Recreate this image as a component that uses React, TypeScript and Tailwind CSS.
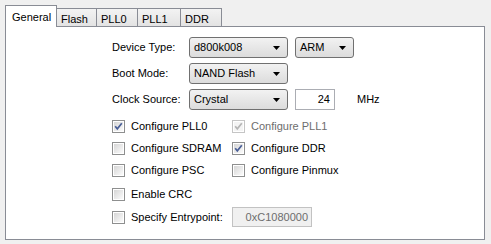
import React from 'react'

const font = { fontFamily: '"Liberation Sans", Arial, sans-serif' }

function Check({ checked = false, disabled = false }: { checked?: boolean; disabled?: boolean }) {
  return (
    <svg width="13" height="13" viewBox="0 0 13 13" className="shrink-0">
      <defs>
        <linearGradient id="cbg" x1="0" y1="0" x2="1" y2="1">
          <stop offset="0" stopColor="#d6d6d6" />
          <stop offset="1" stopColor="#fbfbfb" />
        </linearGradient>
      </defs>
      <rect x="0.5" y="0.5" width="12" height="12" fill="#fff" stroke={disabled ? '#c5c5c5' : '#8e8f8f'} />
      <rect x="2" y="2" width="9" height="9" fill={disabled ? '#f4f4f4' : 'url(#cbg)'} />
      {checked && (
        <path
          d="M3.2 6.2 L5.3 8.8 L9.8 3.2"
          fill="none"
          stroke={disabled ? '#b5b5b5' : '#4a5f97'}
          strokeWidth="1.7"
        />
      )}
    </svg>
  )
}

function Combo({ value, width }: { value: string; width: string }) {
  return (
    <div
      className={`${width} h-[21px] flex items-center justify-between pl-[4px] pr-[7px] rounded-[3px] border border-[#707070] bg-gradient-to-b from-[#f2f2f2] to-[#dcdcdc] text-black`}
    >
      <span>{value}</span>
      <svg width="7" height="4" viewBox="0 0 7 4">
        <path d="M0 0 H7 L3.5 4 Z" fill="#000" />
      </svg>
    </div>
  )
}

function CheckRow({ label, checked, disabled }: { label: string; checked?: boolean; disabled?: boolean }) {
  return (
    <div className="flex items-center gap-[6px] h-[13px]">
      <Check checked={checked} disabled={disabled} />
      <span className={disabled ? 'text-[#6d6d6d]' : 'text-black'}>{label}</span>
    </div>
  )
}

export default function App() {
  const tabs = ['Flash', 'PLL0', 'PLL1', 'DDR']
  const widths = ['w-[40px]', 'w-[41px]', 'w-[43px]', 'w-[41px]']

  return (
    <div className="w-[491px] h-[244px] bg-[#f0f0f0] pl-[5px] pt-[5px] text-[11px]" style={font}>
      <div className="flex items-end h-[21px]">
        <div className="relative z-10 w-[52px] h-[22px] -mb-[1px] bg-white border border-b-0 border-[#898c95] pl-[6px] pt-[3px] text-black">
          General
        </div>
        {tabs.map((t, i) => (
          <div
            key={t}
            className={`${widths[i]} h-[18px] border border-l-0 border-b-0 border-[#898c95] bg-gradient-to-b from-[#f3f3f3] to-[#e3e3e3] pl-[4px] pt-[2px] text-black`}
          >
            {t}
          </div>
        ))}
      </div>

      <div className="w-[480px] h-[214px] bg-white border border-[#898c95] pl-[106px] pt-[10px]">
        <div className="flex flex-col gap-[5px]">
          <div className="flex items-center">
            <span className="w-[77px]">Device Type:</span>
            <Combo value="d800k008" width="w-[99px]" />
            <div className="w-[7px]" />
            <Combo value="ARM" width="w-[59px]" />
          </div>
          <div className="flex items-center">
            <span className="w-[77px]">Boot Mode:</span>
            <Combo value="NAND Flash" width="w-[99px]" />
          </div>
          <div className="flex items-center">
            <span className="w-[77px]">Clock Source:</span>
            <Combo value="Crystal" width="w-[99px]" />
            <div className="w-[7px]" />
            <div className="w-[40px] h-[21px] border border-[#abadb3] bg-white flex items-center justify-end pr-[4px]">24</div>
            <span className="ml-[22px]">MHz</span>
          </div>
        </div>

        <div className="mt-[10px] grid grid-cols-[120px_auto] gap-y-[9px]">
          <CheckRow label="Configure PLL0" checked />
          <CheckRow label="Configure PLL1" checked disabled />
          <CheckRow label="Configure SDRAM" />
          <CheckRow label="Configure DDR" checked />
          <CheckRow label="Configure PSC" />
          <CheckRow label="Configure Pinmux" />
          <div className="col-span-2 mt-[2px]">
            <CheckRow label="Enable CRC" />
          </div>
        </div>

        <div className="mt-[6px] flex items-center">
          <div className="w-[120px]">
            <CheckRow label="Specify Entrypoint:" />
          </div>
          <div className="w-[80px] h-[20px] border border-[#c2c2c2] bg-[#f0f0f0] flex items-center justify-end pr-[3px] text-[#6d6d6d]">
            0xC1080000
          </div>
        </div>
      </div>
    </div>
  )
}
